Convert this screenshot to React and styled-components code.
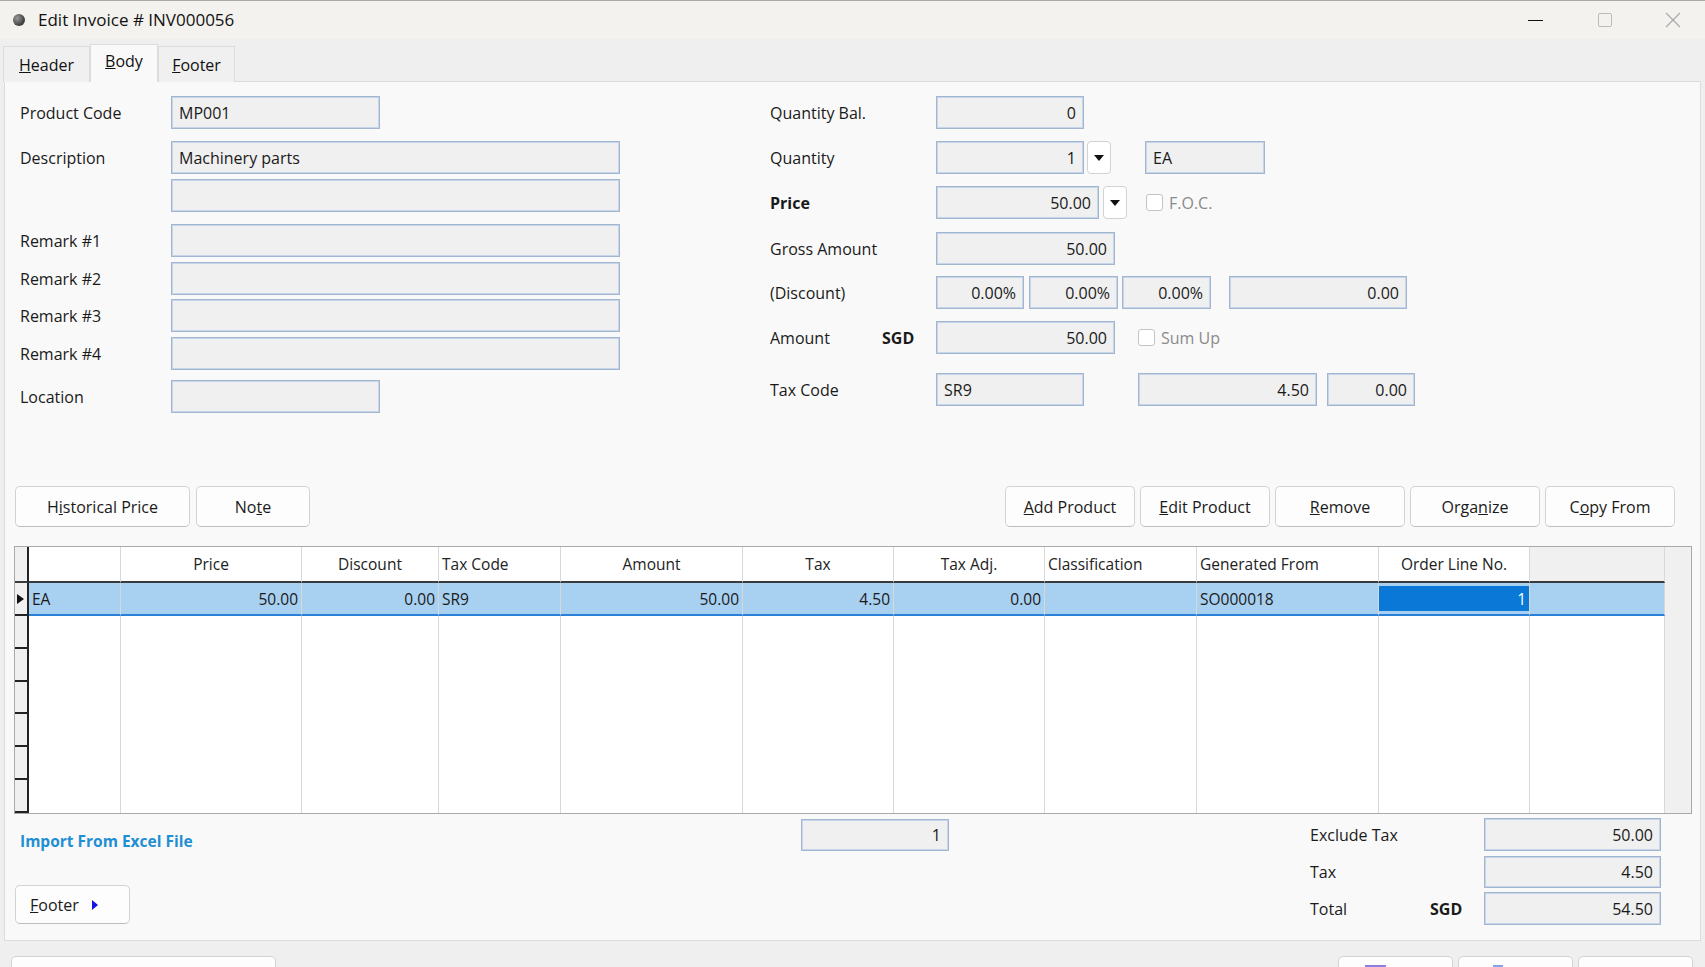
import React from "react";
import styled, { createGlobalStyle } from "styled-components";

const GlobalStyle = createGlobalStyle`
  html, body { margin: 0; padding: 0; background: #efefef; }
  body { font-family: "Open Sans", "Noto Sans", sans-serif; color: #1b1b1b; }
  * { box-sizing: border-box; }
`;

const Window = styled.div`
  width: 1705px;
  height: 967px;
  display: flex;
  flex-direction: column;
  background: #efefef;
  border-top: 1px solid #a9a9a9;
  overflow: hidden;
`;

const TitleBar = styled.div`
  height: 38px;
  flex: none;
  display: flex;
  align-items: center;
  background: #f3f2ee;
`;

const AppDot = styled.span`
  width: 12px;
  height: 12px;
  border-radius: 50%;
  margin: 0 13px 0 13px;
  background: radial-gradient(circle at 35% 35%, #9a9a9a, #3a3a3a 70%);
`;

const Title = styled.div`
  font-size: 17px;
  color: #111;
  flex: 1;
  padding-bottom: 2px;
`;

const WinCtl = styled.div`
  width: ${(p) => p.$w || 70}px;
  height: 38px;
  display: flex;
  align-items: center;
  justify-content: center;
`;

const MinLine = styled.span`
  width: 15px;
  height: 1px;
  background: #111;
`;

const MaxBox = styled.span`
  width: 14px;
  height: 14px;
  border: 1.5px solid #bcbcbc;
  border-radius: 2px;
`;

const TabBar = styled.div`
  height: 42px;
  flex: none;
  display: flex;
  align-items: flex-end;
  padding-left: 3px;
`;

const Tab = styled.div`
  width: ${(p) => p.$w}px;
  height: ${(p) => (p.$active ? 38 : 36)}px;
  padding-bottom: ${(p) => (p.$active ? 5 : 0)}px;
  display: flex;
  align-items: center;
  justify-content: center;
  font-size: 16px;
  color: #111;
  background: ${(p) => (p.$active ? "#f9f9f9" : "#f0f0f0")};
  border: 1px solid #dcdcdc;
  border-bottom: none;
  margin-bottom: -1px;
  position: relative;
  z-index: ${(p) => (p.$active ? 2 : 1)};
`;

const Panel = styled.div`
  margin: 0 4px;
  height: 860px;
  flex: none;
  border: 1px solid #dcdcdc;
  background: #f9f9f9;
  display: flex;
  flex-direction: column;
`;

const FormArea = styled.div`
  display: flex;
  padding-top: 14px;
`;

const LeftCol = styled.div`
  width: 765px;
  padding-left: 15px;
`;

const RightCol = styled.div`
  flex: 1;
`;

const Row = styled.div`
  display: flex;
  align-items: center;
  height: 33px;
  margin-top: ${(p) => p.$gap || 0}px;
`;

const Label = styled.div`
  width: ${(p) => p.$w}px;
  flex: none;
  font-size: 16px;
  font-weight: ${(p) => (p.$bold ? 700 : 400)};
  color: #1a1a1a;
`;

const Currency = styled.span`
  font-weight: 700;
  font-size: 16px;
`;

const AmountLabel = styled.div`
  width: 166px;
  flex: none;
  display: flex;
  font-size: 16px;
  span:first-child { width: 112px; }
`;

const Field = styled.div`
  width: ${(p) => p.$w}px;
  height: ${(p) => p.$h || 33}px;
  margin-left: ${(p) => p.$ml || 0}px;
  flex: none;
  display: flex;
  align-items: center;
  justify-content: ${(p) => (p.$right ? "flex-end" : "flex-start")};
  padding: 0 7px;
  font-size: 16px;
  color: #1a1a1a;
  background: #f0f0f0;
  border: 1px solid #a3b6cf;
  box-shadow: inset 0 0 0 1px #c6d5e8;
`;

const DropBtn = styled.div`
  width: 24px;
  height: 33px;
  margin-left: ${(p) => p.$ml || 3}px;
  flex: none;
  display: flex;
  align-items: center;
  justify-content: center;
  background: #fff;
  border: 1px solid #d2d2d2;
  border-radius: 4px;
  &::after {
    content: "";
    border-left: 5px solid transparent;
    border-right: 5px solid transparent;
    border-top: 6px solid #111;
  }
`;

const Check = styled.span`
  width: 17px;
  height: 17px;
  margin-left: ${(p) => p.$ml || 0}px;
  flex: none;
  background: #fff;
  border: 1px solid #c4c4c4;
  border-radius: 3px;
`;

const CheckText = styled.span`
  margin-left: 6px;
  font-size: 16px;
  color: #8a8a8a;
`;

const ButtonRow = styled.div`
  display: flex;
  justify-content: space-between;
  margin-top: 73px;
  padding: 0 25px 0 10px;
`;

const BtnGroup = styled.div`
  display: flex;
  gap: ${(p) => p.$gap || 6}px;
`;

const Button = styled.div`
  width: ${(p) => p.$w}px;
  height: ${(p) => p.$h || 41}px;
  display: flex;
  align-items: center;
  justify-content: center;
  gap: 12px;
  font-size: 16px;
  color: #1a1a1a;
  background: #fdfdfd;
  border: 1px solid #d3d3d3;
  border-bottom-color: #bdbdbd;
  border-radius: 5px;
`;

const Table = styled.div`
  margin: 19px 0 0 9px;
  width: 1678px;
  height: 268px;
  border: 1px solid #a9a9a9;
  background: #fff;
  display: grid;
  grid-template-columns: 14px 92px 181px 137px 122px 182px 151px 151px 152px 182px 151px 135px 1fr;
  grid-template-rows: 36px 33px repeat(6, 1fr);
  font-size: 15.5px;
`;

const Corner = styled.div`
  background: #f0f0f0;
  border-right: 2px solid #222;
  border-bottom: 2px solid #3a3a3a;
`;

const HeadCell = styled.div`
  display: flex;
  align-items: center;
  justify-content: ${(p) => p.$align || "center"};
  padding: 0 3px;
  color: #222;
  border-right: 1px solid #d8d8d8;
  border-bottom: 2px solid #3a3a3a;
  background: ${(p) => (p.$blank ? "#f0f0f0" : "#fff")};
`;

const ScrollTrack = styled.div`
  grid-column: 13;
  grid-row: 1 / span 8;
  background: #f0f0f0;
`;

const RowHead = styled.div`
  background: #f0f0f0;
  border-right: 2px solid #222;
  border-bottom: 2px solid #222;
  display: flex;
  align-items: center;
  padding-left: 2px;
`;

const Pointer = styled.span`
  border-top: 5px solid transparent;
  border-bottom: 5px solid transparent;
  border-left: 7px solid #111;
`;

const Cell = styled.div`
  display: flex;
  align-items: center;
  justify-content: ${(p) => (p.$right ? "flex-end" : "flex-start")};
  padding: 0 3px;
  color: #1a1a1a;
  border-right: 1px solid #d8d8d8;
  background: ${(p) => (p.$sel ? "#a8d0f1" : "#fff")};
  border-bottom: ${(p) => (p.$sel ? "2px solid #2a7fd8" : "none")};
`;

const ActiveCell = styled(Cell)`
  background: #0a78d7;
  color: #fff;
  box-shadow: inset 0 3px 0 #a8d0f1, inset 0 -3px 0 #a8d0f1;
`;

const BottomArea = styled.div`
  display: flex;
  margin-top: 4px;
  padding: 0 39px 0 15px;
`;

const LeftBottom = styled.div`
  width: 781px;
  display: flex;
  flex-direction: column;
  align-items: flex-start;
`;

const Link = styled.div`
  margin-top: 12px;
  line-height: 22px;
  font-size: 15.5px;
  font-weight: 700;
  color: #1f8fd3;
`;

const FooterBtn = styled(Button)`
  margin: 33px 0 0 -5px;
  justify-content: flex-start;
  padding-left: 14px;
  gap: 13px;
`;

const BlueArrow = styled.span`
  border-top: 5px solid transparent;
  border-bottom: 5px solid transparent;
  border-left: 6px solid #1414e6;
`;

const Totals = styled.div`
  margin-left: auto;
  display: grid;
  grid-template-columns: 120px 54px 177px;
  grid-auto-rows: 33px;
  row-gap: 4px;
  align-items: center;
  font-size: 16px;
`;

const BottomStrip = styled.div`
  flex: 1;
  display: flex;
  justify-content: space-between;
  padding: 15px 12px 0 11px;
`;

const StripBtn = styled.div`
  width: ${(p) => p.$w}px;
  height: 30px;
  background: #fdfdfd;
  border: 1px solid #d3d3d3;
  border-radius: 5px;
  position: relative;
`;

const PeekIcon = styled.span`
  position: absolute;
  top: 8px;
  left: ${(p) => p.$x}px;
  width: ${(p) => p.$w}px;
  height: 6px;
  background: ${(p) => p.$c};
`;

const cols = [
  { h: "", a: "center" },
  { h: "Price", a: "center" },
  { h: "Discount", a: "center" },
  { h: "Tax Code", a: "flex-start" },
  { h: "Amount", a: "center" },
  { h: "Tax", a: "center" },
  { h: "Tax Adj.", a: "center" },
  { h: "Classification", a: "flex-start" },
  { h: "Generated From", a: "flex-start" },
  { h: "Order Line No.", a: "center" },
];

const dataRow = [
  { v: "EA" },
  { v: "50.00", r: true },
  { v: "0.00", r: true },
  { v: "SR9" },
  { v: "50.00", r: true },
  { v: "4.50", r: true },
  { v: "0.00", r: true },
  { v: "" },
  { v: "SO000018" },
];

const Mn = ({ pre, u, post }) => (
  <span>
    {pre}
    <u>{u}</u>
    {post}
  </span>
);

const App = () => {
  return (
    <Window>
      <GlobalStyle />
      <TitleBar>
        <AppDot />
        <Title>Edit Invoice # INV000056</Title>
        <WinCtl>
          <MinLine />
        </WinCtl>
        <WinCtl>
          <MaxBox />
        </WinCtl>
        <WinCtl $w={65}>
          <svg width="16" height="16" viewBox="0 0 16 16">
            <path d="M1 1 L15 15 M15 1 L1 15" stroke="#a9a9a9" strokeWidth="1.2" />
          </svg>
        </WinCtl>
      </TitleBar>

      <TabBar>
        <Tab $w={87}><Mn u="H" post="eader" /></Tab>
        <Tab $w={68} $active><Mn u="B" post="ody" /></Tab>
        <Tab $w={77}><Mn u="F" post="ooter" /></Tab>
      </TabBar>

      <Panel>
        <FormArea>
          <LeftCol>
            <Row>
              <Label $w={151}>Product Code</Label>
              <Field $w={209}>MP001</Field>
            </Row>
            <Row $gap={12}>
              <Label $w={151}>Description</Label>
              <Field $w={449}>Machinery parts</Field>
            </Row>
            <Row $gap={5}>
              <Label $w={151} />
              <Field $w={449} />
            </Row>
            <Row $gap={12}>
              <Label $w={151}>Remark #1</Label>
              <Field $w={449} />
            </Row>
            <Row $gap={5}>
              <Label $w={151}>Remark #2</Label>
              <Field $w={449} />
            </Row>
            <Row $gap={4}>
              <Label $w={151}>Remark #3</Label>
              <Field $w={449} />
            </Row>
            <Row $gap={5}>
              <Label $w={151}>Remark #4</Label>
              <Field $w={449} />
            </Row>
            <Row $gap={10}>
              <Label $w={151}>Location</Label>
              <Field $w={209} />
            </Row>
          </LeftCol>

          <RightCol>
            <Row>
              <Label $w={166}>Quantity Bal.</Label>
              <Field $w={148} $right>0</Field>
            </Row>
            <Row $gap={12}>
              <Label $w={166}>Quantity</Label>
              <Field $w={148} $right>1</Field>
              <DropBtn />
              <Field $w={120} $ml={34}>EA</Field>
            </Row>
            <Row $gap={12}>
              <Label $w={166} $bold>Price</Label>
              <Field $w={163} $right>50.00</Field>
              <DropBtn $ml={4} />
              <Check $ml={19} />
              <CheckText>F.O.C.</CheckText>
            </Row>
            <Row $gap={13}>
              <Label $w={166}>Gross Amount</Label>
              <Field $w={179} $right>50.00</Field>
            </Row>
            <Row $gap={11}>
              <Label $w={166}>(Discount)</Label>
              <Field $w={88} $right>0.00%</Field>
              <Field $w={89} $ml={5} $right>0.00%</Field>
              <Field $w={89} $ml={4} $right>0.00%</Field>
              <Field $w={178} $ml={18} $right>0.00</Field>
            </Row>
            <Row $gap={12}>
              <AmountLabel>
                <span>Amount</span>
                <Currency>SGD</Currency>
              </AmountLabel>
              <Field $w={179} $right>50.00</Field>
              <Check $ml={23} />
              <CheckText>Sum Up</CheckText>
            </Row>
            <Row $gap={19}>
              <Label $w={166}>Tax Code</Label>
              <Field $w={148}>SR9</Field>
              <Field $w={179} $ml={54} $right>4.50</Field>
              <Field $w={88} $ml={10} $right>0.00</Field>
            </Row>
          </RightCol>
        </FormArea>

        <ButtonRow>
          <BtnGroup>
            <Button $w={175}><Mn pre="H" u="i" post="storical Price" /></Button>
            <Button $w={114}><Mn pre="No" u="t" post="e" /></Button>
          </BtnGroup>
          <BtnGroup $gap={5}>
            <Button $w={130}><Mn u="A" post="dd Product" /></Button>
            <Button $w={130}><Mn u="E" post="dit Product" /></Button>
            <Button $w={130}><Mn u="R" post="emove" /></Button>
            <Button $w={130}><Mn pre="Orga" u="n" post="ize" /></Button>
            <Button $w={130}><Mn pre="C" u="o" post="py From" /></Button>
          </BtnGroup>
        </ButtonRow>

        <Table>
          <Corner />
          {cols.map((c, i) => (
            <HeadCell key={i} $align={c.a}>{c.h}</HeadCell>
          ))}
          <HeadCell $blank />
          <ScrollTrack />

          <RowHead><Pointer /></RowHead>
          {dataRow.map((d, i) => (
            <Cell key={i} $sel $right={d.r}>{d.v}</Cell>
          ))}
          <ActiveCell $sel $right>1</ActiveCell>
          <Cell $sel />

          {[0, 1, 2, 3, 4, 5].map((r) => (
            <React.Fragment key={r}>
              <RowHead />
              {Array.from({ length: 11 }).map((_, i) => (
                <Cell key={i} />
              ))}
            </React.Fragment>
          ))}
        </Table>

        <BottomArea>
          <LeftBottom>
            <Link>Import From Excel File</Link>
            <FooterBtn $w={115} $h={39}>
              <Mn u="F" post="ooter" />
              <BlueArrow />
            </FooterBtn>
          </LeftBottom>
          <Field $w={148} $h={32} $right style={{ marginTop: 1 }}>1</Field>
          <Totals>
            <span>Exclude Tax</span>
            <span />
            <Field $w={177} $right>50.00</Field>
            <span>Tax</span>
            <span />
            <Field $w={177} $h={32} $right>4.50</Field>
            <span>Total</span>
            <Currency>SGD</Currency>
            <Field $w={177} $right>54.50</Field>
          </Totals>
        </BottomArea>
      </Panel>

      <BottomStrip>
        <StripBtn $w={265} />
        <BtnGroup $gap={5}>
          <StripBtn $w={115}><PeekIcon $x={26} $w={21} $c="#8b7fe0" /></StripBtn>
          <StripBtn $w={115}><PeekIcon $x={34} $w={10} $c="#7fa6e6" /></StripBtn>
          <StripBtn $w={115} />
        </BtnGroup>
      </BottomStrip>
    </Window>
  );
};

export default App;
